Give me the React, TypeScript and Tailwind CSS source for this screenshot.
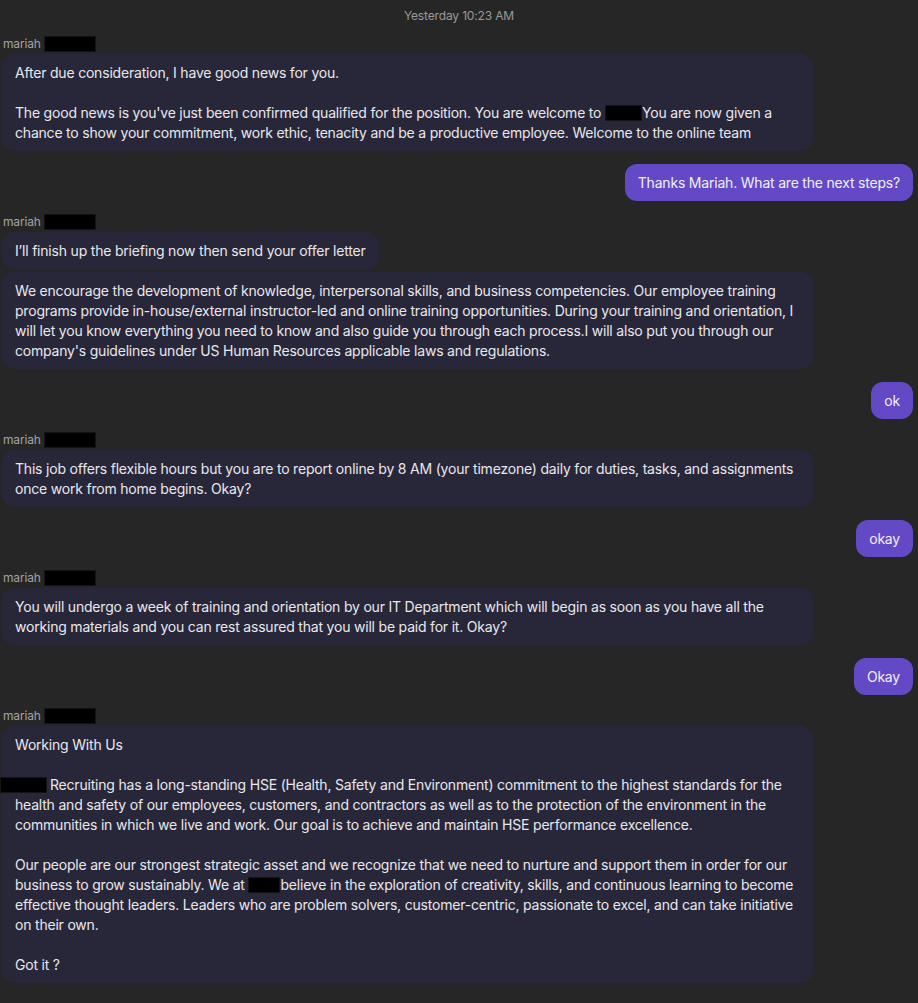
import React from "react";

const Redact = ({ w, h = 16, className = "" }: { w: number; h?: number; className?: string }) => (
  <span
    className={`inline-block bg-black border border-[#141414] align-[-3px] ${className}`}
    style={{ width: w, height: h }}
  />
);

const Name = () => (
  <div className="flex items-center h-4 mb-[2px] pl-[1px] text-[12px] leading-4 tracking-[-0.15px] text-[#a3a3a3]">
    <span>mariah</span>
    <span className="inline-block ml-[3px] w-[52px] h-[16px] bg-black border border-[#141414]" />
  </div>
);

const Left = ({ children }: { children: React.ReactNode }) => (
  <div className="self-start max-w-[811px] rounded-xl bg-[#28273a] px-[13px] py-[8.5px] text-[14px] leading-5 tracking-[-0.2px] text-[#e8e8ec]">
    {children}
  </div>
);

const Right = ({ children }: { children: React.ReactNode }) => (
  <div className="self-end rounded-xl bg-[#6449c7] px-[13px] py-[8.5px] text-[14px] leading-5 tracking-[-0.2px] text-[#f1effa]">
    {children}
  </div>
);

const Blank = () => <div className="h-5" />;

export default function App() {
  return (
    <div
      className="min-h-[1003px] w-full bg-[#262626] pl-[2px] pr-[5px]"
      style={{ fontFamily: "Inter, 'Noto Sans', sans-serif" }}
    >
      <div className="h-8 flex items-center justify-center text-[12px] tracking-[-0.15px] text-[#9a9a9a] pl-[3px]">
        Yesterday 10:23 AM
      </div>
      <div className="mt-1 flex flex-col gap-[13px]">
        <div className="flex flex-col">
          <Name />
          <Left>
            <div>After due consideration, I have good news for you.</div>
            <Blank />
            <div>
              The good news is you've just been confirmed qualified for the position. You are welcome to{" "}
              <Redact w={37} />
              You are now given a chance to show your commitment, work ethic, tenacity and be a productive
              employee. Welcome to the online team
            </div>
          </Left>
        </div>

        <Right>Thanks Mariah. What are the next steps?</Right>

        <div className="flex flex-col">
          <Name />
          <div className="flex flex-col gap-[3px]">
            <Left>I’ll finish up the briefing now then send your offer letter</Left>
            <Left>
              We encourage the development of knowledge, interpersonal skills, and business competencies. Our
              employee training programs provide in-house/external instructor-led and online training
              opportunities. During your training and orientation, I will let you know everything you need to
              know and also guide you through each process.I will also put you through our company's guidelines
              under US Human Resources applicable laws and regulations.
            </Left>
          </div>
        </div>

        <Right>ok</Right>

        <div className="flex flex-col">
          <Name />
          <Left>
            This job offers flexible hours but you are to report online by 8 AM (your timezone) daily for
            duties, tasks, and assignments once work from home begins. Okay?
          </Left>
        </div>

        <Right>okay</Right>

        <div className="flex flex-col">
          <Name />
          <Left>
            You will undergo a week of training and orientation by our IT Department which will begin as soon
            as you have all the working materials and you can rest assured that you will be paid for it. Okay?
          </Left>
        </div>

        <Right>Okay</Right>

        <div className="flex flex-col">
          <Name />
          <Left>
            <div>Working With Us</div>
            <Blank />
            <div>
              <Redact w={47} className="-ml-[15px] mr-[3px]" />
              Recruiting has a long-standing HSE (Health, Safety and Environment) commitment to the highest
              standards for the health and safety of our employees, customers, and contractors as well as to the
              protection of the environment in the communities in which we live and work. Our goal is to achieve
              and maintain HSE performance excellence.
            </div>
            <Blank />
            <div>
              Our people are our strongest strategic asset and we recognize that we need to nurture and support
              them in order for our business to grow sustainably. We at <Redact w={32} />
              believe in the exploration of creativity, skills, and continuous learning to become effective
              thought leaders. Leaders who are problem solvers, customer-centric, passionate to excel, and can
              take initiative on their own.
            </div>
            <Blank />
            <div>Got it ?</div>
          </Left>
        </div>
      </div>
    </div>
  );
}
